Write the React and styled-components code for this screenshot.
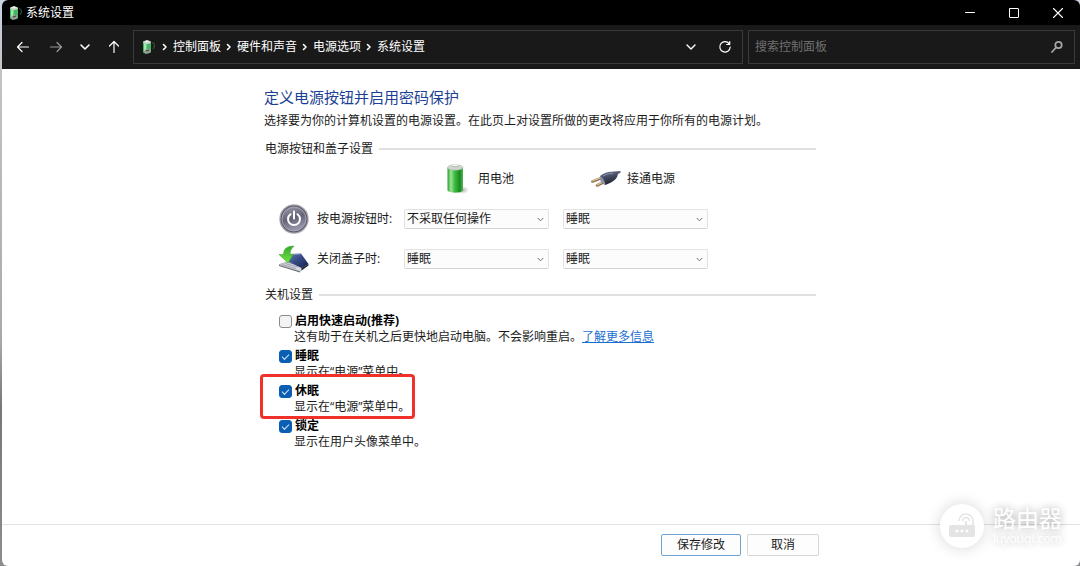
import React from 'react';
import styled, { createGlobalStyle, css } from 'styled-components';

const GlobalStyle = createGlobalStyle`
  *,
  *::before,
  *::after {
    box-sizing: border-box;
  }

  body {
    margin: 0;
    background: #8d8d8f;
    color: #1b1b1b;
    font-family: 'Open Sans', 'Noto Sans CJK SC', sans-serif;
    font-size: 12px;
    line-height: 18px;
  }

  button,
  input,
  select {
    font: inherit;
  }

  svg {
    flex: none;
  }
`;

const Desktop = styled.div`
  min-height: 100vh;
  display: flex;
  padding-left: 2px;
  background: linear-gradient(180deg, #c9d2de 0, #c4c4c8 12%, #a9a9ab 60%, #77777a 72%, #8d8d8f 100%);
`;

const Window = styled.div`
  flex: 1;
  min-width: 0;
  display: flex;
  flex-direction: column;
  position: relative;
  overflow: hidden;
  border-radius: 6px;
  background: #fff;
`;

const TitleBar = styled.header`
  display: flex;
  align-items: center;
  height: 25px;
  padding-left: 6px;
  background: #000;
  color: #fff;
`;

const WindowTitle = styled.h1`
  flex: 1;
  margin: 0 0 0 3px;
  font-size: 12px;
  font-weight: 400;
  line-height: 18px;
`;

const IconButton = styled.button`
  display: flex;
  align-items: center;
  justify-content: center;
  width: ${({ $width }) => $width}px;
  height: 25px;
  padding: 0;
  border: 0;
  background: none;
  color: ${({ $muted }) => ($muted ? '#9a9a9a' : '#fff')};
`;

const NavBar = styled.nav`
  display: flex;
  align-items: center;
  height: 44px;
  padding: 0 5px;
  background: #191919;
  color: #fff;
`;

const NavButtons = styled.div`
  display: flex;
  width: 126px;
`;

const AddressBar = styled.div`
  flex: 1;
  display: flex;
  align-items: center;
  height: 34px;
  padding-left: 7px;
  border: 1px solid #3a3a3a;
`;

const Crumbs = styled.ol`
  flex: 1;
  display: flex;
  margin: 0;
  padding: 0 0 0 1px;
  list-style: none;
`;

const Crumb = styled.li`
  display: flex;
  align-items: center;
  white-space: nowrap;

  svg {
    width: 16px;
  }

  a {
    color: inherit;
    text-decoration: none;
  }
`;

const SearchBox = styled.label`
  flex: 0 1 327px;
  display: flex;
  align-items: center;
  height: 34px;
  margin-left: 5px;
  padding: 0 10px 0 6px;
  border: 1px solid #3a3a3a;
  color: #a5a5a5;
`;

const SearchInput = styled.input`
  flex: 1;
  min-width: 0;
  padding: 0;
  border: 0;
  outline: 0;
  background: none;
  color: #fff;

  &::placeholder {
    color: #707070;
    opacity: 1;
  }
`;

const Main = styled.main`
  flex: 1;
  padding: 17px 2px 24px 0;
`;

const Content = styled.div`
  max-width: 552px;
  margin: 0 auto;
`;

const PageTitle = styled.h2`
  margin: 0;
  color: #1b3f94;
  font-size: 15px;
  font-weight: 400;
  line-height: 22px;
`;

const Intro = styled.p`
  margin: 4px 0 10px;
  white-space: nowrap;
`;

const SectionTitle = styled.h3`
  display: flex;
  align-items: center;
  gap: 6px;
  margin: 0;
  padding-left: 1px;
  font-size: 12px;
  font-weight: 400;
  line-height: 18px;

  &::after {
    content: '';
    flex: 1;
    height: 2px;
    background: #e0e0e0;
  }
`;

const PowerGrid = styled.div`
  display: grid;
  grid-template-columns: 111px 145px 145px;
  grid-auto-rows: 32px;
  gap: 8px 14px;
  align-items: center;
  margin: 5px 0 11px;
  padding-left: 15px;
`;

const SourceHead = styled.div`
  display: flex;
  align-items: center;
  gap: ${({ $gap }) => $gap}px;
  grid-column: ${({ $column }) => $column};
  padding-left: ${({ $indent }) => $indent}px;
`;

const ActionLabel = styled.div`
  display: flex;
  align-items: center;
  gap: 8px;
  white-space: nowrap;
`;

const SelectWrap = styled.div`
  position: relative;

  svg {
    position: absolute;
    top: 6px;
    right: 4px;
    color: #6a6a6a;
    pointer-events: none;
  }
`;

const Select = styled.select`
  display: block;
  width: 100%;
  height: 20px;
  padding: 0 18px 0 2px;
  border: 1px solid #e2e2e2;
  border-bottom-color: #d2d2d2;
  border-radius: 2px;
  appearance: none;
  background: #fcfcfc;
  color: #1b1b1b;
`;

const OptionList = styled.div`
  display: grid;
  gap: 3px;
  margin-top: 9px;
  padding-left: 15px;
`;

const Option = styled.div`
  position: relative;
  display: grid;
  grid-template-columns: 15px 1fr;
  justify-items: start;
  align-items: center;
  grid-auto-rows: 16px;
  line-height: 16px;

  ${({ $marked }) =>
    $marked &&
    css`
      &::before {
        content: '';
        position: absolute;
        top: -9px;
        left: -19px;
        width: 155px;
        height: 45px;
        border: 3px solid #f0312a;
        border-radius: 4px;
        pointer-events: none;
      }
    `}
`;

const Checkbox = styled.input`
  position: relative;
  width: 13px;
  height: 13px;
  margin: 0;
  border: 1px solid #8c8c8c;
  border-radius: 3px;
  appearance: none;
  background: #f3f3f3;

  &:checked {
    border-color: #0a5fb4;
    background: #0a5fb4;
  }

  &:checked::after {
    content: '';
    position: absolute;
    top: 3px;
    left: 2px;
    width: 7px;
    height: 4px;
    border: solid #d5e8fa;
    border-width: 0 0 1px 1px;
    transform: rotate(-45deg);
  }
`;

const OptionLabel = styled.label`
  padding-left: 1px;
  color: #000;
  font-weight: 700;
`;

const OptionText = styled.p`
  grid-column: 2;
  margin: 0;
  white-space: nowrap;
`;

const Link = styled.a`
  color: #1a6fd0;
`;

const Footer = styled.footer`
  height: 42px;
  padding: 9px 2px 0 0;
  border-top: 1px solid #e2e2e2;
`;

const FooterActions = styled.div`
  display: flex;
  justify-content: flex-end;
  gap: 6px;
  max-width: 558px;
  margin: 0 auto;
`;

const Button = styled.button`
  width: ${({ $primary }) => ($primary ? 80 : 72)}px;
  height: 22px;
  padding: 0;
  border: 1px solid ${({ $primary }) => ($primary ? '#6fa3d3' : '#d6d6d6')};
  border-radius: 2px;
  background: #fdfdfd;
  color: #1b1b1b;
  line-height: 18px;
`;

const Watermark = styled.div`
  position: absolute;
  right: 18px;
  bottom: 18px;
  display: flex;
  align-items: center;
  gap: 9px;
  color: #fff;
  pointer-events: none;
`;

const WatermarkBadge = styled.div`
  display: flex;
  align-items: center;
  justify-content: center;
  width: 44px;
  height: 44px;
  border-radius: 50%;
  background: #fff;
  box-shadow: 0 0 14px 2px rgba(0, 0, 0, 0.12);
`;

const WatermarkText = styled.div`
  font-size: 12px;
  line-height: 16px;
  text-shadow:
    0 0 10px rgba(0, 0, 0, 0.2),
    0 0 10px rgba(0, 0, 0, 0.2);

  strong {
    display: block;
    font-size: 23px;
    font-weight: 400;
    line-height: 26px;
  }
`;

const Stroke = ({ size = 14, width = 1.2, children }) => (
  <svg
    width={size}
    height={size}
    viewBox="0 0 14 14"
    fill="none"
    stroke="currentColor"
    strokeWidth={width}
    strokeLinecap="round"
    strokeLinejoin="round"
    aria-hidden="true"
  >
    {children}
  </svg>
);

const ChevronDown = ({ size = 14, width = 1.4 }) => (
  <Stroke size={size} width={width}>
    <path d="M3 5l4 4 4-4" />
  </Stroke>
);

const PowerOptionsIcon = () => (
  <svg width="15" height="16" viewBox="0 0 15 16" aria-hidden="true">
    <path d="M11 4c3-1 3 4 1 6" fill="none" stroke="#356b45" strokeWidth="1" />
    <path d="M2 3.500q4-2 8 0v10q-4 2-8 0z" fill="#43b565" />
    <path d="M3 4.500h2.500v8H3z" fill="#9ceba9" />
    <ellipse cx="6" cy="3.300" rx="4" ry="1.700" fill="#c9d6cc" />
    <ellipse cx="6" cy="2.200" rx="1.800" ry="1" fill="#eef3ef" />
    <path d="M3 12l3-2.500 4 1-2 3.500-4 1z" fill="#9b9b93" />
    <path d="M5 12l3-1" stroke="#3b3b3b" />
  </svg>
);

const BatteryIcon = () => (
  <svg width="24" height="32" viewBox="0 0 24 32" aria-hidden="true">
    <defs>
      <linearGradient id="cell">
        <stop offset="0" stopColor="#2c9a31" />
        <stop offset=".22" stopColor="#9be796" />
        <stop offset=".45" stopColor="#43bd43" />
        <stop offset=".8" stopColor="#158a20" />
        <stop offset="1" stopColor="#56b856" />
      </linearGradient>
      <radialGradient id="cellShade">
        <stop offset="0" stopColor="#777" stopOpacity=".6" />
        <stop offset="1" stopColor="#777" stopOpacity="0" />
      </radialGradient>
    </defs>
    <ellipse cx="16" cy="27" rx="7" ry="4" fill="url(#cellShade)" />
    <path d="M1.500 4.500v22.500c0 3.500 15.500 3.500 15.500 0V4.500z" fill="url(#cell)" />
    <ellipse cx="9.200" cy="4.500" rx="7.700" ry="2.800" fill="#cdd5cf" stroke="#9fb5a2" strokeWidth=".5" />
    <path d="M6 3.500v-1.500q3.200-1.500 6.500 0v1.500q-3 1.500-6.500 0z" fill="#aeb4b2" />
    <ellipse cx="9.200" cy="2.200" rx="3.200" ry="1" fill="#f5f7f5" />
  </svg>
);

const PlugIcon = () => (
  <svg width="30" height="18" viewBox="0 0 30 18" aria-hidden="true">
    <defs>
      <linearGradient id="plug" x2=".3" y2="1">
        <stop offset="0" stopColor="#777e98" />
        <stop offset=".5" stopColor="#434961" />
        <stop offset="1" stopColor="#20242f" />
      </linearGradient>
    </defs>
    <path d="M1.500 11.500l9-3.500M6 15.500l8-4" stroke="#8c6b48" strokeWidth="2.600" strokeLinecap="round" />
    <path d="M1.500 11l9-3.500M6 15l8-4" stroke="#e9c9a0" strokeWidth="1.200" strokeLinecap="round" />
    <path d="M9 6q5-4 11-4.200l6-.5L29.500 1v1.800L27 4q-1 5.500-7 8.500l-5.500 2.500q-4.500-2-5.500-9z" fill="url(#plug)" />
    <path d="M9 6q4 1.500 5.500 9l-2-.7Q8 11 9 6z" fill="#8a91a5" />
    <path d="M12 6q5-3 10-2.700" fill="none" stroke="#959bb0" strokeWidth=".8" />
  </svg>
);

const PowerButtonIcon = () => (
  <svg width="30" height="32" viewBox="0 0 30 32" aria-hidden="true">
    <defs>
      <linearGradient id="disc" x2=".3" y2="1">
        <stop offset="0" stopColor="#9d9cac" />
        <stop offset=".55" stopColor="#646277" />
        <stop offset="1" stopColor="#9795aa" />
      </linearGradient>
    </defs>
    <circle cx="15" cy="16" r="14.700" fill="#aaa9b2" />
    <circle cx="15" cy="16" r="13.500" fill="#5d5b6b" />
    <circle cx="15" cy="16" r="12" fill="url(#disc)" stroke="#b3b2c0" strokeWidth=".8" />
    <path d="M11.500 11.200a6 6 0 1 0 7 0" fill="none" stroke="#fff" strokeWidth="2" strokeLinecap="round" />
    <path d="M15 8.500v7" stroke="#fff" strokeWidth="2" strokeLinecap="round" />
  </svg>
);

const LidIcon = () => (
  <svg width="30" height="28" viewBox="0 0 30 28" aria-hidden="true">
    <defs>
      <linearGradient id="lid" x2="1" y2="1">
        <stop offset="0" stopColor="#6378b1" />
        <stop offset=".5" stopColor="#314681" />
        <stop offset="1" stopColor="#141f49" />
      </linearGradient>
      <linearGradient id="arrow" x2="0" y2="1">
        <stop offset="0" stopColor="#34a82c" />
        <stop offset="1" stopColor="#72e544" />
      </linearGradient>
    </defs>
    <path d="M0 19.500L11 16l18 4-8 6.500z" fill="#d6d8df" stroke="#8d909d" strokeWidth=".6" />
    <path d="M0 20l21 6.500v1L0 21z" fill="#62656f" />
    <path d="M3 19.500l14 4M6 18.500l13 3.500M9 17.500l12 3" stroke="#888c99" strokeWidth=".7" />
    <path d="M10 9l12-.5 7.500 10.500-7 4L10 17z" fill="url(#lid)" />
    <path d="M29.500 19l-7 4v2.500l7-5z" fill="#25262e" />
    <path d="M11 9.500l10.500-.5" stroke="#a8b5db" strokeWidth=".7" />
    <path d="M15 1Q4 1 4.500 9.500H0L9 18l5.500-8.500H11Q10.500 5 15 1z" fill="url(#arrow)" stroke="#319c28" strokeWidth=".5" />
  </svg>
);

const RouterIcon = () => (
  <svg width="28" height="26" viewBox="0 0 28 26" fill="none" aria-hidden="true">
    <rect x="1" y="12" width="26" height="12" rx="2" fill="#e4e4e4" />
    <path d="M18 13V8" stroke="#e4e4e4" strokeWidth="2" />
    <path d="M14.500 8a3.500 3.500 0 0 1 7 0M11 8a7 7 0 0 1 14 0v4" stroke="#e4e4e4" strokeWidth="1.600" />
    <circle cx="9" cy="18" r="1.500" fill="#fff" />
    <circle cx="14" cy="18" r="1.500" fill="#fff" />
    <circle cx="19" cy="18" r="1.500" fill="#fff" />
  </svg>
);

const crumbs = ['控制面板', '硬件和声音', '电源选项', '系统设置'];

const actions = [
  { id: 'button', label: '按电源按钮时:', icon: <PowerButtonIcon />, battery: '不采取任何操作', plugged: '睡眠' },
  { id: 'lid', label: '关闭盖子时:', icon: <LidIcon />, battery: '睡眠', plugged: '睡眠' },
];

const choices = ['不采取任何操作', '睡眠', '休眠', '关机'];

const options = [
  {
    id: 'fast',
    label: '启用快速启动(推荐)',
    text: '这有助于在关机之后更快地启动电脑。不会影响重启。',
    link: '了解更多信息',
  },
  { id: 'sleep', label: '睡眠', text: '显示在“电源”菜单中。', checked: true },
  { id: 'hibernate', label: '休眠', text: '显示在“电源”菜单中。', checked: true, marked: true },
  { id: 'lock', label: '锁定', text: '显示在用户头像菜单中。', checked: true },
];

const ActionSelect = ({ label, value }) => (
  <SelectWrap>
    <Select aria-label={label} defaultValue={value}>
      {choices.map((choice) => (
        <option key={choice}>{choice}</option>
      ))}
    </Select>
    <ChevronDown size={9} width={1.5} />
  </SelectWrap>
);

const App = () => (
  <>
    <GlobalStyle />
    <Desktop>
      <Window>
        <TitleBar>
          <PowerOptionsIcon />
          <WindowTitle>系统设置</WindowTitle>
          <IconButton $width={44} aria-label="最小化">
            <Stroke width={1}><path d="M2.500 6.500h9" /></Stroke>
          </IconButton>
          <IconButton $width={44} aria-label="最大化">
            <Stroke width={1}><rect x="2.500" y="2.500" width="9" height="9" rx=".5" /></Stroke>
          </IconButton>
          <IconButton $width={44} aria-label="关闭">
            <Stroke width={1.1}><path d="M2.500 2.500l9 9M11.500 2.500l-9 9" /></Stroke>
          </IconButton>
        </TitleBar>

        <NavBar>
          <NavButtons>
            <IconButton $width={32} aria-label="后退">
              <Stroke><path d="M12.500 7h-11M6 2.500L1.500 7 6 11.500" /></Stroke>
            </IconButton>
            <IconButton $width={34} $muted aria-label="前进">
              <Stroke><path d="M1.500 7h11M8 2.500L12.500 7 8 11.500" /></Stroke>
            </IconButton>
            <IconButton $width={24} aria-label="最近的位置">
              <ChevronDown width={1.6} />
            </IconButton>
            <IconButton $width={34} aria-label="向上">
              <Stroke><path d="M7 12.500v-11M2.500 6L7 1.500 11.500 6" /></Stroke>
            </IconButton>
          </NavButtons>
          <AddressBar>
            <PowerOptionsIcon />
            <Crumbs>
              {crumbs.map((crumb) => (
                <Crumb key={crumb}>
                  <Stroke size={14} width={1.6}><path d="M5.500 4.500L8 7 5.500 9.500" /></Stroke>
                  <a href="#">{crumb}</a>
                </Crumb>
              ))}
            </Crumbs>
            <IconButton $width={34} aria-label="展开">
              <ChevronDown />
            </IconButton>
            <IconButton $width={34} aria-label="刷新">
              <Stroke><path d="M11.500 4.200A5.200 5.200 0 1 0 12.200 7M11.700 1.500v3h-3" /></Stroke>
            </IconButton>
          </AddressBar>
          <SearchBox>
            <SearchInput type="search" placeholder="搜索控制面板" aria-label="搜索控制面板" />
            <Stroke width={1.8}><circle cx="8.500" cy="5" r="3.200" /><path d="M6 7.500L2 12" /></Stroke>
          </SearchBox>
        </NavBar>

        <Main>
          <Content>
            <PageTitle>定义电源按钮并启用密码保护</PageTitle>
            <Intro>选择要为你的计算机设置的电源设置。在此页上对设置所做的更改将应用于你所有的电源计划。</Intro>

            <SectionTitle>电源按钮和盖子设置</SectionTitle>
            <PowerGrid>
              <SourceHead $column={2} $indent={42} $gap={8}>
                <BatteryIcon />
                用电池
              </SourceHead>
              <SourceHead $column={3} $indent={28} $gap={6}>
                <PlugIcon />
                接通电源
              </SourceHead>
              {actions.map(({ id, label, icon, battery, plugged }) => (
                <React.Fragment key={id}>
                  <ActionLabel>
                    {icon}
                    {label}
                  </ActionLabel>
                  <ActionSelect label={`${label} 用电池`} value={battery} />
                  <ActionSelect label={`${label} 接通电源`} value={plugged} />
                </React.Fragment>
              ))}
            </PowerGrid>

            <SectionTitle>关机设置</SectionTitle>
            <OptionList>
              {options.map(({ id, label, text, link, checked, marked }) => (
                <Option key={id} $marked={marked}>
                  <Checkbox type="checkbox" id={id} defaultChecked={checked} />
                  <OptionLabel htmlFor={id}>{label}</OptionLabel>
                  <OptionText>
                    {text}
                    {link && <Link href="#">{link}</Link>}
                  </OptionText>
                </Option>
              ))}
            </OptionList>
          </Content>
        </Main>

        <Footer>
          <FooterActions>
            <Button $primary>保存修改</Button>
            <Button>取消</Button>
          </FooterActions>
        </Footer>

        <Watermark>
          <WatermarkBadge>
            <RouterIcon />
          </WatermarkBadge>
          <WatermarkText>
            <strong>路由器</strong>
            luyouqi.com
          </WatermarkText>
        </Watermark>
      </Window>
    </Desktop>
  </>
);

export default App;
